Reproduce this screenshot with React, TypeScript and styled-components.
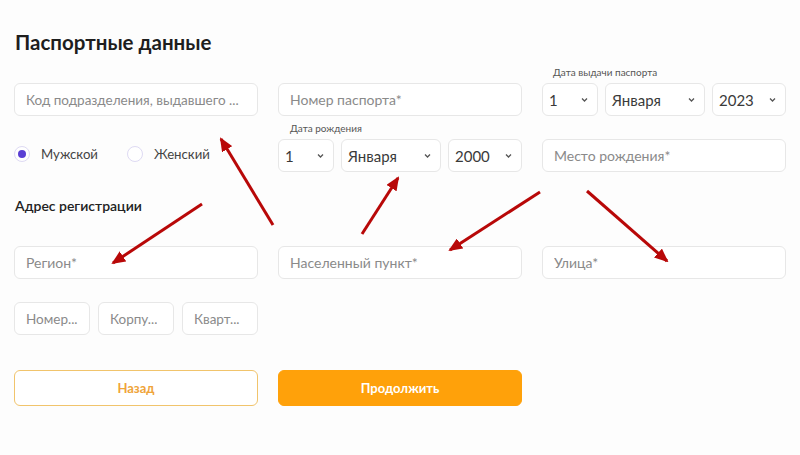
import React, { FC } from 'react';
import styled, { createGlobalStyle } from 'styled-components';

const GlobalStyle = createGlobalStyle`
    body {
        margin: 0;
        background: #fdfdfd;
        font-family: Lato, 'Noto Sans', 'Liberation Sans', sans-serif;
    }
`;

const Page = styled.div`
    position: relative;
    width: 800px;
    height: 455px;
    box-sizing: border-box;
    padding: 30px 14px 0;
    background: #fdfdfd;
    overflow: hidden;
`;

const Title = styled.h1`
    margin: 0 0 12px 1px;
    font-size: 20.5px;
    line-height: 24px;
    font-weight: 700;
    color: #1e1e1e;
`;

const Row = styled.div<{ $mt?: number }>`
    display: grid;
    grid-template-columns: repeat(3, 244px);
    column-gap: 20px;
    align-items: end;
    margin-top: ${(p) => p.$mt ?? 0}px;
`;

const Field = styled.div`
    display: flex;
    flex-direction: column;
`;

const FieldLabel = styled.div<{ $pl: number }>`
    font-size: 10px;
    line-height: 12px;
    color: #555;
    margin-bottom: 5px;
    padding-left: ${(p) => p.$pl}px;
`;

const Input = styled.div<{ $compact?: boolean }>`
    height: 33px;
    box-sizing: border-box;
    border: 1px solid #e7e7e7;
    border-radius: 6px;
    background: #fff;
    padding: ${(p) => (p.$compact ? '0 4px 0 11px' : '0 11px')};
    display: flex;
    align-items: center;
    font-size: ${(p) => (p.$compact ? '13.5px' : '14px')};
    color: #8a8a8a;
    min-width: 0;
`;

const Placeholder = styled.span`
    display: block;
    min-width: 0;
    white-space: nowrap;
    overflow: hidden;
    text-overflow: ellipsis;
`;

const SelectRow = styled.div<{ $cols: string }>`
    display: grid;
    grid-template-columns: ${(p) => p.$cols};
    column-gap: 7px;
`;

const Select = styled.div`
    height: 33px;
    box-sizing: border-box;
    border: 1px solid #e7e7e7;
    border-radius: 6px;
    background: #fff;
    padding: 0 8px 0 6px;
    display: flex;
    align-items: center;
    justify-content: space-between;
    font-size: 15px;
    color: #3a3a3a;
`;

const SmallInputs = styled.div`
    display: grid;
    grid-template-columns: repeat(3, 1fr);
    column-gap: 8px;
`;

const RadioGroup = styled.div`
    display: flex;
    align-items: center;
    gap: 29px;
    height: 33px;
    padding-bottom: 4px;
    box-sizing: border-box;
`;

const RadioOption = styled.label`
    display: flex;
    align-items: center;
    gap: 11px;
    font-size: 13.2px;
    color: #444;
`;

const RadioCircle = styled.span<{ $checked?: boolean }>`
    width: 16px;
    height: 16px;
    box-sizing: border-box;
    border: 1.5px solid #dedaf3;
    border-radius: 50%;
    background: #fff;
    display: flex;
    align-items: center;
    justify-content: center;
    &::after {
        content: '';
        width: 8px;
        height: 8px;
        border-radius: 50%;
        background: ${(p) => (p.$checked ? '#5a3fd4' : 'transparent')};
    }
`;

const SubTitle = styled.h2`
    margin: 25px 0 0 1px;
    font-size: 14px;
    line-height: 17px;
    font-weight: 600;
    color: #222;
`;

const Button = styled.button<{ $primary?: boolean }>`
    height: 36px;
    border-radius: 6px;
    font-family: inherit;
    font-size: 13px;
    font-weight: 700;
    cursor: pointer;
    border: 1px solid ${(p) => (p.$primary ? '#ffa10a' : '#f1c46c')};
    background: ${(p) => (p.$primary ? '#ffa10a' : '#fff')};
    color: ${(p) => (p.$primary ? '#fff' : '#efa43a')};
`;

const Arrows = styled.svg`
    position: absolute;
    left: 0;
    top: 0;
    pointer-events: none;
`;

const Chevron: FC = () => (
    <svg width="9" height="6" viewBox="0 0 9 6">
        <path d="M2 1.5 L4.5 4 L7 1.5" fill="none" stroke="#555" strokeWidth="1.3" />
    </svg>
);

const Dropdown: FC<{ value: string }> = ({ value }) => (
    <Select>
        <span>{value}</span>
        <Chevron />
    </Select>
);

const TextInput: FC<{ placeholder: string; compact?: boolean }> = ({ placeholder, compact }) => (
    <Input $compact={compact}>
        <Placeholder>{placeholder}</Placeholder>
    </Input>
);

const arrows = [
    [273, 225, 221, 139],
    [202, 204, 113, 263],
    [362, 234, 398, 178],
    [540, 192, 450, 250],
    [587, 191, 667, 261],
];

const App: FC = () => (
    <Page>
        <GlobalStyle />
        <Title>Паспортные данные</Title>
        <Row>
            <TextInput compact placeholder="Код подразделения, выдавшего ..." />
            <TextInput placeholder="Номер паспорта*" />
            <Field>
                <FieldLabel $pl={11}>Дата выдачи паспорта</FieldLabel>
                <SelectRow $cols="56px 100px 1fr">
                    <Dropdown value="1" />
                    <Dropdown value="Января" />
                    <Dropdown value="2023" />
                </SelectRow>
            </Field>
        </Row>
        <Row $mt={6}>
            <RadioGroup>
                <RadioOption>
                    <RadioCircle $checked />
                    Мужской
                </RadioOption>
                <RadioOption>
                    <RadioCircle />
                    Женский
                </RadioOption>
            </RadioGroup>
            <Field>
                <FieldLabel $pl={12}>Дата рождения</FieldLabel>
                <SelectRow $cols="56px 100px 1fr">
                    <Dropdown value="1" />
                    <Dropdown value="Января" />
                    <Dropdown value="2000" />
                </SelectRow>
            </Field>
            <TextInput placeholder="Место рождения*" />
        </Row>
        <SubTitle>Адрес регистрации</SubTitle>
        <Row $mt={32}>
            <TextInput placeholder="Регион*" />
            <TextInput placeholder="Населенный пункт*" />
            <TextInput placeholder="Улица*" />
        </Row>
        <Row $mt={23}>
            <SmallInputs>
                <TextInput compact placeholder="Номер..." />
                <TextInput compact placeholder="Корпу..." />
                <TextInput compact placeholder="Кварт..." />
            </SmallInputs>
        </Row>
        <Row $mt={35}>
            <Button>Назад</Button>
            <Button $primary>Продолжить</Button>
        </Row>
        <Arrows width="800" height="455" viewBox="0 0 800 455">
            <defs>
                <marker
                    id="head"
                    markerUnits="userSpaceOnUse"
                    markerWidth="14"
                    markerHeight="12"
                    refX="12"
                    refY="6"
                    orient="auto"
                >
                    <path d="M0 0 L14 6 L0 12 Z" fill="#b80808" />
                </marker>
            </defs>
            {arrows.map(([x1, y1, x2, y2], i) => (
                <line
                    key={i}
                    x1={x1}
                    y1={y1}
                    x2={x2}
                    y2={y2}
                    stroke="#b80808"
                    strokeWidth="3"
                    markerEnd="url(#head)"
                />
            ))}
        </Arrows>
    </Page>
);

export default App;
